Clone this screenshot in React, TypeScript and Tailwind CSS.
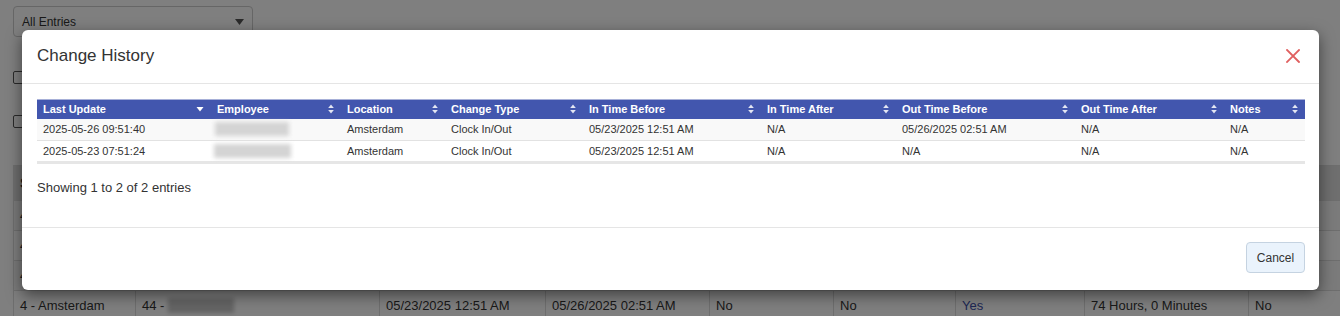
import React from "react";

const SortBoth = () => (
  <svg width="6" height="10" viewBox="0 0 6 10" className="shrink-0">
    <path d="M3 0.5 L5.8 4 L0.2 4 Z" fill="rgba(255,255,255,0.85)" />
    <path d="M3 9.5 L5.8 6 L0.2 6 Z" fill="rgba(255,255,255,0.85)" />
  </svg>
);

const SortDesc = () => (
  <svg width="8" height="10" viewBox="0 0 8 10" className="shrink-0">
    <path d="M0.5 3 L7.5 3 L4 7.5 Z" fill="#ffffff" />
  </svg>
);

const cols = [
  { name: "Last Update", w: 174, desc: true },
  { name: "Employee", w: 130 },
  { name: "Location", w: 104 },
  { name: "Change Type", w: 138 },
  { name: "In Time Before", w: 178 },
  { name: "In Time After", w: 135 },
  { name: "Out Time Before", w: 179 },
  { name: "Out Time After", w: 149 },
  { name: "Notes", w: 81 },
];

const rows = [
  ["2025-05-26 09:51:40", "", "Amsterdam", "Clock In/Out", "05/23/2025 12:51 AM", "N/A", "05/26/2025 02:51 AM", "N/A", "N/A"],
  ["2025-05-23 07:51:24", "", "Amsterdam", "Clock In/Out", "05/23/2025 12:51 AM", "N/A", "N/A", "N/A", "N/A"],
];

const bgCols = [122, 244, 166, 164, 124, 122, 129, 164, 105];
const bgHead = ["Site", "Employee", "In Time", "Out Time", "Edited", "Missed", "Approved", "Total Time", "Flag"];
const bgRow = ["4 - Amsterdam", "44 - ", "05/23/2025 12:51 AM", "05/26/2025 02:51 AM", "No", "No", "Yes", "74 Hours, 0 Minutes", "No"];

export default function App() {
  return (
    <div className="relative w-[1340px] h-[316px] overflow-hidden bg-white text-[#333] font-['Liberation_Sans',Arial,sans-serif]">
      {/* Background page */}
      <div className="pl-[13px] pt-[6px] w-[1500px]">
        <div className="w-[240px] h-[31px] border border-[#cccccc] rounded-[4px] flex items-center justify-between pl-[8px] pr-[8px] text-[12px]">
          <span>All Entries</span>
          <svg width="9" height="6" viewBox="0 0 9 6">
            <path d="M0 0 L9 0 L4.5 6 Z" fill="#555" />
          </svg>
        </div>
        <div className="mt-[34px] w-[13px] h-[13px] border border-[#555] rounded-[2px] bg-white" />
        <div className="mt-[31px] w-[13px] h-[13px] border border-[#555] rounded-[2px] bg-white" />
        <table className="mt-[37px] w-[1340px] table-fixed border-collapse text-[13px]">
          <colgroup>
            {bgCols.map((w, i) => (
              <col key={i} style={{ width: w }} />
            ))}
          </colgroup>
          <thead>
            <tr className="h-[35px] bg-[#dedede]">
              {bgHead.map((h, i) => (
                <th key={i} className="text-left font-bold text-[14px] px-[6px] border border-[#dddddd]">
                  {h}
                </th>
              ))}
            </tr>
          </thead>
          <tbody>
            {[0, 1, 2, 3].map((r) => (
              <tr key={r} className={`h-[30px] ${r % 2 === 0 ? "bg-[#f7f7f7]" : "bg-white"}`}>
                {bgRow.map((c, i) => (
                  <td key={i} className="px-[6px] border border-[#dddddd] whitespace-nowrap">
                    {i === 1 ? (
                      <span className="flex items-center">
                        <span>{c}</span>
                        <span className="ml-[4px] inline-block w-[66px] h-[15px] bg-[#c8c8c8] blur-[2px]" />
                      </span>
                    ) : i === 6 ? (
                      <span className="text-[#3c4fa8]">{c}</span>
                    ) : (
                      c
                    )}
                  </td>
                ))}
              </tr>
            ))}
          </tbody>
        </table>
      </div>

      {/* Overlay */}
      <div className="absolute inset-0 bg-black/50" />

      {/* Modal */}
      <div className="absolute left-[22px] top-[30px] w-[1297px] h-[260px] bg-white rounded-[6px] shadow-[0_5px_15px_rgba(0,0,0,0.5)] flex flex-col">
        <div className="h-[54px] border-b border-[#e5e5e5] flex items-center justify-between pl-[15px] pr-[19px] pb-[2px] shrink-0">
          <span className="text-[17px] text-[#333]">Change History</span>
          <svg width="14" height="14" viewBox="0 0 14 14">
            <path d="M1 1 L13 13 M13 1 L1 13" stroke="#e06060" strokeWidth="1.8" strokeLinecap="square" />
          </svg>
        </div>
        <div className="h-[144px] px-[15px] pt-[15px] border-b border-[#e5e5e5] shrink-0">
          <table className="table-fixed border-collapse w-[1268px] text-[11px] border-b-[3px] border-b-[#e6e6e6]">
            <colgroup>
              {cols.map((c, i) => (
                <col key={i} style={{ width: c.w }} />
              ))}
            </colgroup>
            <thead>
              <tr className="h-[19px] bg-[#4256ae] border-t border-t-[#a7b0d8]">
                {cols.map((c, i) => (
                  <th key={i} className="p-0 text-left font-bold text-white">
                    <div className="flex items-center justify-between pl-[6px] pr-[7px]">
                      <span>{c.name}</span>
                      {c.desc ? <SortDesc /> : <SortBoth />}
                    </div>
                  </th>
                ))}
              </tr>
            </thead>
            <tbody>
              {rows.map((r, ri) => (
                <tr key={ri} className={`h-[22px] ${ri === 0 ? "bg-[#f9f9f9] border-b border-b-[#e2e2e2]" : "bg-white"}`}>
                  {r.map((c, i) => (
                    <td key={i} className="px-[6px] py-0 whitespace-nowrap text-[#333]">
                      {i === 1 ? (
                        <span className={`block h-[14px] bg-[#d4d4d4] blur-[2px] ${ri === 0 ? "w-[74px] ml-[-2px]" : "w-[77px] ml-[-3px]"}`} />
                      ) : (
                        c
                      )}
                    </td>
                  ))}
                </tr>
              ))}
            </tbody>
          </table>
          <div className="mt-[15px] text-[13px] text-[#333] leading-[18px]">Showing 1 to 2 of 2 entries</div>
        </div>
        <div className="flex-1 flex justify-end items-start pt-[14px] pr-[14px]">
          <button className="h-[31px] w-[59px] rounded-[4px] border border-[#c5d3e1] bg-[#eaf3fc] text-[12px] text-[#333]">
            Cancel
          </button>
        </div>
      </div>
    </div>
  );
}
